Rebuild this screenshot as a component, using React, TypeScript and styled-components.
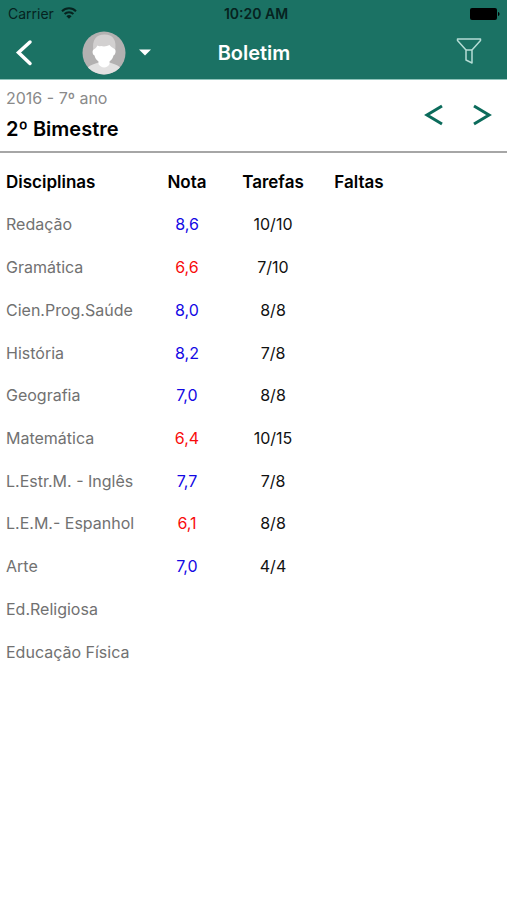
import React from "react";
import styled, { createGlobalStyle } from "styled-components";

const GlobalStyle = createGlobalStyle`
  *, *::before, *::after { box-sizing: border-box; }
  body {
    margin: 0;
    background: #fff;
    color: #000;
    font-family: Inter, "Liberation Sans", sans-serif;
  }
`;

const Header = styled.header`
  background: #1b7264;
  border-bottom: 1px solid #8fc4ba;
`;

const StatusBar = styled.div`
  display: grid;
  grid-template-columns: 1fr auto 1fr;
  align-items: center;
  height: 27px;
  padding: 0 7px 0 8px;
  font-size: 14px;
  line-height: 18px;
  color: #06231f;
`;

const Carrier = styled.div`
  display: flex;
  align-items: center;
  gap: 7px;
`;

const Clock = styled.time`
  font-weight: 600;
  padding-left: 4px;
`;

const BatterySlot = styled.div`
  display: flex;
  justify-content: flex-end;
`;

const NavBar = styled.nav`
  display: grid;
  grid-template-columns: 1fr auto 1fr;
  align-items: center;
  height: 52px;
  padding: 0 25px 0 12px;
`;

const NavLeft = styled.div`
  display: flex;
  align-items: center;
  gap: 46px;
`;

const IconButton = styled.button`
  display: flex;
  align-items: center;
  justify-content: center;
  padding: 0;
  border: 0;
  background: none;
  color: inherit;
  cursor: pointer;
`;

const ProfileButton = styled(IconButton)`
  gap: 13px;
  color: #fff;
`;

const FilterButton = styled(IconButton)`
  justify-self: end;
  padding-bottom: 4px;
`;

const Title = styled.h1`
  margin: 0 0 0 14px;
  font-size: 20px;
  line-height: 24px;
  font-weight: 600;
  color: #fff;
`;

const Period = styled.section`
  display: flex;
  align-items: center;
  justify-content: space-between;
  height: 73px;
  padding: 0 15px 0 6px;
  border-bottom: 2px solid #a6a6a6;
`;

const Year = styled.p`
  margin: 0;
  font-size: 16px;
  line-height: 26px;
  color: #8a8a8a;
`;

const Term = styled.h2`
  margin: 0;
  font-size: 20px;
  line-height: 36px;
  font-weight: 600;
`;

const Arrows = styled.div`
  display: flex;
  gap: 28px;
  padding-bottom: 2px;
  color: #0b6b5b;
`;

const Table = styled.table`
  width: 100%;
  height: 513px;
  margin-top: 7px;
  table-layout: fixed;
  border-collapse: collapse;
  font-size: 16px;
  line-height: 20px;
`;

const SubjectCol = styled.col`
  width: 144px;
`;

const ValueCol = styled.col`
  width: 86px;
`;

const HeadRow = styled.tr`
  height: 43px;
`;

const HeadCell = styled.th<{ $start?: boolean }>`
  padding: 0 0 0 ${(p) => (p.$start ? "6px" : "0")};
  text-align: ${(p) => (p.$start ? "left" : "center")};
  font-size: 17px;
  font-weight: 600;
`;

const Subject = styled.th`
  padding: 0 0 0 6px;
  text-align: left;
  font-weight: 400;
  color: #717171;
  white-space: nowrap;
`;

const Cell = styled.td<{ $color?: string }>`
  padding: 0;
  text-align: center;
  color: ${(p) => p.$color || "#111"};
`;

type Row = { subject: string; grade?: string; tasks?: string; low?: boolean };

const rows: Row[] = [
  { subject: "Redação", grade: "8,6", tasks: "10/10" },
  { subject: "Gramática", grade: "6,6", tasks: "7/10", low: true },
  { subject: "Cien.Prog.Saúde", grade: "8,0", tasks: "8/8" },
  { subject: "História", grade: "8,2", tasks: "7/8" },
  { subject: "Geografia", grade: "7,0", tasks: "8/8" },
  { subject: "Matemática", grade: "6,4", tasks: "10/15", low: true },
  { subject: "L.Estr.M. - Inglês", grade: "7,7", tasks: "7/8" },
  { subject: "L.E.M.- Espanhol", grade: "6,1", tasks: "8/8", low: true },
  { subject: "Arte", grade: "7,0", tasks: "4/4" },
  { subject: "Ed.Religiosa" },
  { subject: "Educação Física" },
];

const WifiIcon = () => (
  <svg width="16" height="14" viewBox="0 0 16 14" fill="none" stroke="currentColor" strokeWidth="2" aria-hidden="true">
    <path d="M1 4.2a10 10 0 0 1 14 0" />
    <path d="M3.6 7a6.2 6.2 0 0 1 8.8 0" />
    <path d="M8 11.8 5.4 9.2a3.7 3.7 0 0 1 5.2 0Z" fill="currentColor" stroke="none" />
  </svg>
);

const BatteryIcon = () => (
  <svg width="30" height="12" viewBox="0 0 30 12" fill="#000" aria-hidden="true">
    <rect width="27" height="12" rx="2" />
    <path d="M28 4c2 .3 2 3.700 0 4Z" />
  </svg>
);

const BackIcon = () => (
  <svg width="24" height="28" viewBox="0 0 24 28" fill="none" stroke="#fff" strokeWidth="3.500" strokeLinecap="round" aria-hidden="true">
    <path d="M18 3 6.500 13.500 18 24.500" />
  </svg>
);

const Avatar = () => (
  <svg width="44" height="44" viewBox="0 0 44 44" aria-hidden="true">
    <defs>
      <clipPath id="avatar-disc">
        <circle cx="22" cy="22" r="21.500" />
      </clipPath>
    </defs>
    <g clipPath="url(#avatar-disc)">
      <rect width="44" height="44" fill="#b3b1b1" />
      <path d="M3 44c0-8 5-10 13.500-12.500h11C36 34 41 36 41 44Z" fill="#e2e1e1" />
      <path d="M11.500 20C9.500 9 14 3.500 22.500 3.500S35 9 33 20Z" fill="#d2d0d0" />
      <path d="M12.500 18c1.500-1 2-2 3-3.500 1 .8 2 1 3.500.5 3 .8 6 .3 8.500-1 1.500 2 3 2.500 5 4 2 1 1 6-1 6.500-.5 2.500-2 4.500-4 6v2.500c-2 4.500-8.500 4.500-11 0v-2.500c-2-1.500-3.500-3.500-4-6-2-.5-3-5.500 0-6.500Z" fill="#fff" />
    </g>
  </svg>
);

const CaretIcon = () => (
  <svg width="12" height="8" viewBox="0 0 12 8" fill="#fff" aria-hidden="true">
    <path d="M0 .5h12L6 6.500Z" />
  </svg>
);

const FilterIcon = () => (
  <svg width="26" height="28" viewBox="0 0 26 28" fill="none" stroke="#b5dcd5" strokeWidth="1.500" strokeLinejoin="round" aria-hidden="true">
    <path d="M1.500 2h23v1.500L16 13v13l-6-3V13L1.500 3.500Z" />
    <path d="M10 13h6" />
  </svg>
);

const ArrowIcon = ({ next }: { next?: boolean }) => (
  <svg width="20" height="22" viewBox="0 0 20 22" fill="none" stroke="currentColor" strokeWidth="3" aria-hidden="true">
    <path d={next ? "M2 2 17 11 2 20" : "M18 2 3 11 18 20"} />
  </svg>
);

export default function App() {
  return (
    <>
      <GlobalStyle />
      <Header>
        <StatusBar>
          <Carrier>
            Carrier <WifiIcon />
          </Carrier>
          <Clock>10:20 AM</Clock>
          <BatterySlot>
            <BatteryIcon />
          </BatterySlot>
        </StatusBar>
        <NavBar>
          <NavLeft>
            <IconButton aria-label="Voltar">
              <BackIcon />
            </IconButton>
            <ProfileButton aria-label="Selecionar aluno">
              <Avatar />
              <CaretIcon />
            </ProfileButton>
          </NavLeft>
          <Title>Boletim</Title>
          <FilterButton aria-label="Filtrar">
            <FilterIcon />
          </FilterButton>
        </NavBar>
      </Header>
      <main>
        <Period>
          <div>
            <Year>2016 - 7º ano</Year>
            <Term>2º Bimestre</Term>
          </div>
          <Arrows>
            <IconButton aria-label="Bimestre anterior">
              <ArrowIcon />
            </IconButton>
            <IconButton aria-label="Próximo bimestre">
              <ArrowIcon next />
            </IconButton>
          </Arrows>
        </Period>
        <Table>
          <colgroup>
            <SubjectCol />
            <ValueCol />
            <ValueCol />
            <ValueCol />
            <col />
          </colgroup>
          <thead>
            <HeadRow>
              <HeadCell scope="col" $start>Disciplinas</HeadCell>
              <HeadCell scope="col">Nota</HeadCell>
              <HeadCell scope="col">Tarefas</HeadCell>
              <HeadCell scope="col">Faltas</HeadCell>
              <td />
            </HeadRow>
          </thead>
          <tbody>
            {rows.map((row) => (
              <tr key={row.subject}>
                <Subject scope="row">{row.subject}</Subject>
                <Cell $color={row.low ? "#f80c0c" : "#1408e4"}>{row.grade}</Cell>
                <Cell>{row.tasks}</Cell>
                <Cell />
                <td />
              </tr>
            ))}
          </tbody>
        </Table>
      </main>
    </>
  );
}
